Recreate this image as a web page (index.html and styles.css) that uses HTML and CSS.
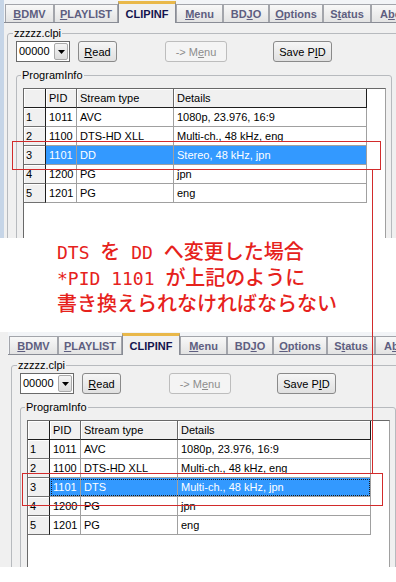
FILE: index.html
```html
<!DOCTYPE html>
<html lang="ja">
<head>
<meta charset="utf-8">
<title>CLIPINF</title>
<link rel="stylesheet" href="styles.css">
</head>
<body>
<div class="page">
  <section class="shot shot-top">
    <div class="win">
      <div class="tabs">
        <span class="tab tab-bdmv"><u>B</u>DMV</span>
        <span class="tab tab-pl"><u>P</u>LAYLIST</span>
        <span class="tab tab-clip is-active">CLIPINF</span>
        <span class="tab tab-menu"><u>M</u>enu</span>
        <span class="tab tab-bdjo">BD<u>J</u>O</span>
        <span class="tab tab-opt"><u>O</u>ptions</span>
        <span class="tab tab-stat">S<u>t</u>atus</span>
        <span class="tab tab-about">A<u>b</u>out</span>
      </div>
      <div class="tabpage">
        <fieldset class="grp grp-file">
          <legend>zzzzz.clpi</legend>
          <div class="toolbar">
            <div class="combo"><span class="combo-val">00000</span><span class="combo-btn"><svg width="7" height="4" viewBox="0 0 7 4"><path d="M0 0h7L3.5 4z" fill="#000"/></svg></span></div>
            <div class="btn btn-read"><u>R</u>ead</div>
            <div class="btn btn-menu is-disabled">-&gt; M<u>e</u>nu</div>
            <div class="btn btn-save">Save P<u>I</u>D</div>
          </div>
          <fieldset class="grp grp-prog">
            <legend>ProgramInfo</legend>
            <div class="grid">
              <div class="row row-head"><div class="rh"></div><div class="cells"><div class="c c1">PID</div><div class="c c2">Stream type</div><div class="c c3">Details</div></div></div>
              <div class="row"><div class="rh">1</div><div class="cells"><div class="c c1">1011</div><div class="c c2">AVC</div><div class="c c3">1080p, 23.976, 16:9</div></div></div>
              <div class="row"><div class="rh">2</div><div class="cells"><div class="c c1">1100</div><div class="c c2">DTS-HD XLL</div><div class="c c3">Multi-ch., 48 kHz, eng</div></div></div>
              <div class="row is-sel"><div class="rh">3</div><div class="cells"><div class="c c1">1101</div><div class="c c2">DD</div><div class="c c3">Stereo, 48 kHz, jpn</div></div></div>
              <div class="row"><div class="rh">4</div><div class="cells"><div class="c c1">1200</div><div class="c c2">PG</div><div class="c c3">jpn</div></div></div>
              <div class="row"><div class="rh">5</div><div class="cells"><div class="c c1">1201</div><div class="c c2">PG</div><div class="c c3">eng</div></div></div>
            </div>
          </fieldset>
        </fieldset>
      </div>
    </div>
  </section>

  <div class="note">
    <p><span class="lat">DTS </span>を<span class="lat"> DD </span>へ変更した場合</p>
    <p><span class="lat">*PID 1101 </span>が上記のように</p>
    <p>書き換えられなければならない</p>
  </div>

  <section class="shot shot-bottom">
    <div class="win">
      <div class="tabs">
        <span class="tab tab-bdmv"><u>B</u>DMV</span>
        <span class="tab tab-pl"><u>P</u>LAYLIST</span>
        <span class="tab tab-clip is-active">CLIPINF</span>
        <span class="tab tab-menu"><u>M</u>enu</span>
        <span class="tab tab-bdjo">BD<u>J</u>O</span>
        <span class="tab tab-opt"><u>O</u>ptions</span>
        <span class="tab tab-stat">S<u>t</u>atus</span>
        <span class="tab tab-about">A<u>b</u>out</span>
      </div>
      <div class="tabpage">
        <fieldset class="grp grp-file">
          <legend>zzzzz.clpi</legend>
          <div class="toolbar">
            <div class="combo"><span class="combo-val">00000</span><span class="combo-btn"><svg width="7" height="4" viewBox="0 0 7 4"><path d="M0 0h7L3.5 4z" fill="#000"/></svg></span></div>
            <div class="btn btn-read"><u>R</u>ead</div>
            <div class="btn btn-menu is-disabled">-&gt; M<u>e</u>nu</div>
            <div class="btn btn-save">Save P<u>I</u>D</div>
          </div>
          <fieldset class="grp grp-prog">
            <legend>ProgramInfo</legend>
            <div class="grid">
              <div class="row row-head"><div class="rh"></div><div class="cells"><div class="c c1">PID</div><div class="c c2">Stream type</div><div class="c c3">Details</div></div></div>
              <div class="row"><div class="rh">1</div><div class="cells"><div class="c c1">1011</div><div class="c c2">AVC</div><div class="c c3">1080p, 23.976, 16:9</div></div></div>
              <div class="row"><div class="rh">2</div><div class="cells"><div class="c c1">1100</div><div class="c c2">DTS-HD XLL</div><div class="c c3">Multi-ch., 48 kHz, eng</div></div></div>
              <div class="row is-sel is-focus"><div class="rh">3</div><div class="cells"><div class="c c1">1101</div><div class="c c2">DTS</div><div class="c c3">Multi-ch., 48 kHz, jpn</div></div></div>
              <div class="row"><div class="rh">4</div><div class="cells"><div class="c c1">1200</div><div class="c c2">PG</div><div class="c c3">jpn</div></div></div>
              <div class="row"><div class="rh">5</div><div class="cells"><div class="c c1">1201</div><div class="c c2">PG</div><div class="c c3">eng</div></div></div>
            </div>
          </fieldset>
        </fieldset>
      </div>
    </div>
  </section>

  <div class="mark mark-top"></div>
  <div class="mark-link"></div>
  <div class="mark mark-bottom"></div>
</div>
</body>
</html>
```

FILE: styles.css
```css
* { box-sizing: border-box; }
html, body { margin: 0; padding: 0; background: #fff; }
body {
  font-family: "Liberation Sans", Arial, sans-serif;
  font-size: 11px;
  color: #000;
}
.page {
  position: relative;
  width: 396px;
  height: 582px;
  overflow: hidden;
  background: #fff;
}

/* screenshot frames */
.shot { overflow: hidden; background: #f0f0f0; }
.shot-top { height: 238px; border-left: 4px solid #c6d5e7; }
.shot-bottom { height: 235px; padding-left: 8px; }
.win { width: 420px; }

/* tab strip */
.tabs {
  display: flex;
  align-items: flex-end;
  height: 23px;
  padding-left: 1px;
  border-bottom: 1px solid #898c95;
  background: #f2f4f7;
}
.tab {
  flex: none;
  height: 18px;
  display: flex;
  align-items: center;
  justify-content: center;
  border: 1px solid #a3a5ab;
  border-bottom: 0;
  background: linear-gradient(#f8f8f8, #e3e3e3);
  font-weight: bold;
  color: #5e5e80;
  white-space: nowrap;
}
.tab.is-active {
  height: 22px;
  margin-bottom: -1px;
  border-color: #898c95;
  border-top: 3px solid #e9b84a;
  background: #f0f0f0;
  color: #14144e;
}
.tab-bdmv { width: 49px; }
.tab-pl { width: 64px; }
.tab-clip { width: 58px; }
.tab-menu { width: 47px; }
.tab-bdjo { width: 46px; }
.tab-opt { width: 54px; }
.tab-stat { width: 48px; }
.tab-about { width: 50px; }

.tabpage { padding-top: 4px; background: #f0f0f0; }

/* group boxes */
.grp {
  margin: 0;
  min-width: 0;
  border: 1px solid #b7babe;
  border-radius: 3px;
}
.grp > legend {
  padding: 0 1px;
  font-size: 11px;
  line-height: 13px;
}
.grp-file { margin-left: 3px; width: 420px; padding: 1px 0 0 8px; }
.grp-file > legend { margin-left: -3px; }
.grp-prog { margin-top: 7px; width: 376px; padding: 6px 0 0 6px; }
.grp-prog > legend { margin-left: -2px; }

/* toolbar */
.toolbar { display: flex; height: 21px; }
.combo {
  flex: none;
  width: 54px;
  height: 21px;
  display: flex;
  border: 1px solid #6a6a6a;
  background: #fff;
}
.combo-val { flex: 1; padding-left: 2px; line-height: 19px; }
.combo-btn {
  flex: none;
  width: 14px;
  margin: 1px;
  display: flex;
  align-items: center;
  justify-content: center;
  border: 1px solid #a9a9a9;
  border-radius: 2px;
  background: linear-gradient(#f4f4f4, #dcdcdc);
}
.btn {
  flex: none;
  height: 21px;
  display: flex;
  align-items: center;
  justify-content: center;
  border: 1px solid #8a8a8a;
  border-radius: 3px;
  background: linear-gradient(#f6f6f6, #e0e0e0);
  white-space: nowrap;
}
.btn-read { width: 39px; margin-left: 8px; }
.btn-menu { width: 62px; margin-left: 48px; }
.btn-save { width: 59px; margin-left: 46px; }
.btn.is-disabled { color: #8d8d8d; border-color: #bdbdbd; background: #f4f4f4; }

/* data grid */
.grid {
  width: 363px;
  height: 200px;
  background: #fff;
  border: 1px solid;
  border-color: #696969 #a0a0a0 #a0a0a0 #696969;
}
.row { display: flex; height: 19px; }
.rh {
  flex: none;
  width: 22px;
  padding-left: 2px;
  line-height: 18px;
  background: #f0f0f0;
  border-right: 1px solid #1e1e1e;
  border-bottom: 1px solid #707070;
  box-shadow: inset 1px 1px 0 #fff;
}
.cells { display: flex; }
.c {
  flex: none;
  padding-left: 3px;
  line-height: 18px;
  border-right: 1px solid #a0a0a0;
  border-bottom: 1px solid #a0a0a0;
  white-space: nowrap;
  overflow: hidden;
}
.c1 { width: 31px; }
.c2 { width: 97px; }
.c3 { width: 193px; }
.row-head .c {
  background: #f0f0f0;
  border-right-color: #696969;
  border-bottom-color: #1e1e1e;
  box-shadow: inset 1px 1px 0 #fff;
}
.row-head .c3 { border-right-color: #1e1e1e; }
.row-head .rh { border-bottom-color: #1e1e1e; }
.row.is-sel .c { background: #3399ff; color: #fff; }
.row.is-focus .cells { outline: 1px dotted #1a1a1a; outline-offset: -2px; }

/* annotation */
.note { height: 94px; padding: 1px 0 0 57px; background: #fff; }
.note p {
  margin: 0;
  font-family: "Noto Sans CJK JP", sans-serif;
  font-size: 20px;
  font-weight: 500;
  line-height: 24px;
  color: #e6221c;
  white-space: nowrap;
}
.note .lat { font-family: "DejaVu Sans Mono", "Noto Sans CJK JP", monospace; font-size: 18px; }

.mark { position: absolute; border: 1px solid #d22b2b; }
.mark-top { left: 12px; top: 141px; width: 369px; height: 29px; }
.mark-bottom { left: 22px; top: 473px; width: 361px; height: 33px; }
.mark-link { position: absolute; left: 372px; top: 169px; width: 1px; height: 305px; background: #d22b2b; }
```
